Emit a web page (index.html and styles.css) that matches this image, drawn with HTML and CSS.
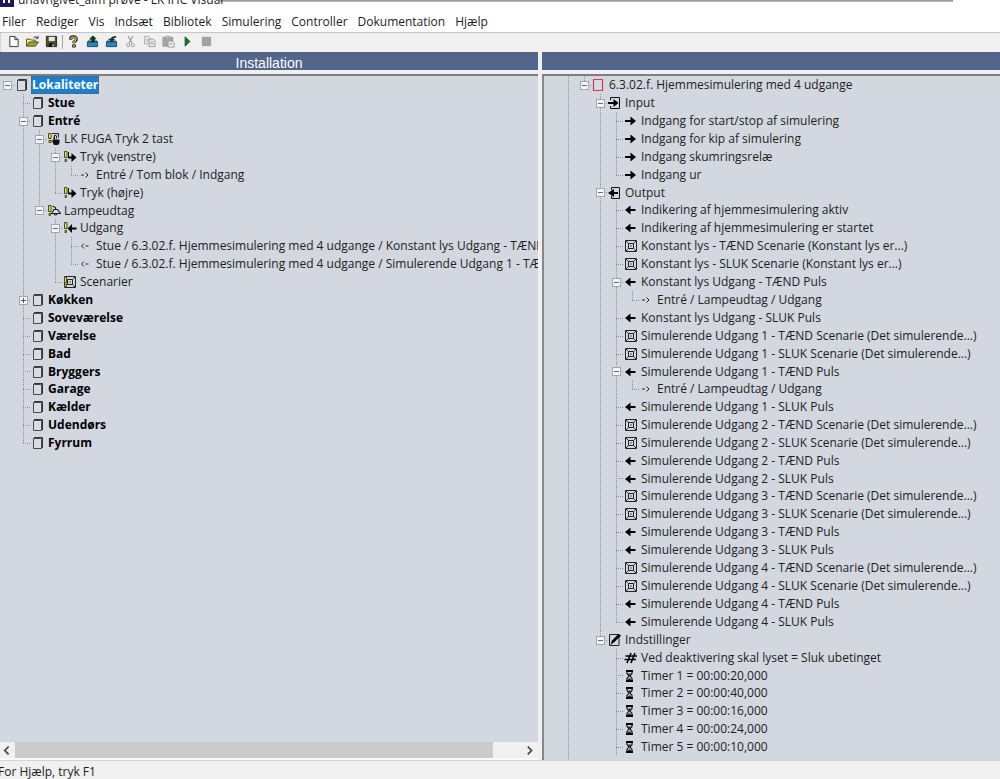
FILE: index.html
```
<!DOCTYPE html>
<html lang="da">
<head>
<meta charset="utf-8">
<meta name="viewport" content="width=device-width, initial-scale=1">
<title>unavngivet_alm prøve - LK IHC Visual</title>
<link rel="stylesheet" href="styles.css">
</head>
<body>
<svg class="sprite" aria-hidden="true">
  <symbol id="room" viewBox="0 0 14 14"><path d="M2.500 2.500h8v10h-8z" fill="#d9dce3" stroke="#4a4a4a"/><path d="M3 1.500h8.500V12" fill="none" stroke="#333"/></symbol>
  <symbol id="block" viewBox="0 0 14 14"><path d="M1.500 1.500h9v11h-9z" fill="#d8dae2" stroke="#d23a50" stroke-width="1.200"/></symbol>
  <symbol id="fuga" viewBox="0 0 14 14"><path d="M1.500 1.500h2.500v5H1.500zM2 8.500h2v2H2z" fill="#e4e66a" stroke="#4a4a10"/><path d="M5 1.500h6.500v4M7 3.500h2M7.500 3.500v3M9.500 3.500v3" fill="none" stroke="#222"/><path d="M4.500 8l2 .5V5H8v2.500h4.500V11l-1.500 2H7z" fill="#111"/></symbol>
  <symbol id="key-in" viewBox="0 0 14 14"><path d="M1.500 1.500H4v6H1.500zM2 9.500h1.500v2H2z" fill="#e4e66a" stroke="#4a4a10"/><path d="M5.500 2v5.500H9" fill="none" stroke="#111"/><path d="M5 6.500h3.500V3l5 4.500-5 4.500V8.500H5z" fill="#000"/></symbol>
  <symbol id="key-out" viewBox="0 0 14 14"><path d="M1.500 1.500H4v6H1.500zM2 9.500h1.500v2H2z" fill="#e4e66a" stroke="#4a4a10"/><path d="M4.500 7.500L9 3v3.500h4.500v2H9V12z" fill="#000"/></symbol>
  <symbol id="lamp" viewBox="0 0 14 14"><path d="M1.500 1.500H4v6H1.500zM2 9.500h1.500v2H2z" fill="#e4e66a" stroke="#4a4a10"/><path d="M4.500 9.500L7 5.500h3.500l3 4zM8.500 5.500V3.500L5.500 2M7 10q1.500 2 3 0" fill="none" stroke="#222" stroke-width="1.200"/></symbol>
  <symbol id="right" viewBox="0 0 14 14"><path d="M1 6h5.500V2.500l5.500 4.500-5.500 4.500V8H1z" fill="#000"/></symbol>
  <symbol id="left" viewBox="0 0 14 14"><path d="M11.500 6h-5V2.500L1 7l5.500 4.500V8h5z" fill="#000"/></symbol>
  <symbol id="link-right" viewBox="0 0 14 14"><path d="M2 7h3M6.500 4.500L9 7 6.500 9.500" fill="none" stroke="#222"/></symbol>
  <symbol id="link-left" viewBox="0 0 14 14"><path d="M6.500 7h3M5 4.500L2.500 7 5 9.500" fill="none" stroke="#222"/></symbol>
  <symbol id="scene" viewBox="0 0 14 14"><path d="M1.500 1.500h11v11h-11zM4.500 4.500h5v5h-5zM2 2l2.500 2.500M12 2L9.500 4.500M2 12l2.500-2.500M12 12L9.500 9.500" fill="none" stroke="#222"/><path d="M6 6h2v2H6z" fill="#999"/></symbol>
  <symbol id="key-scene" viewBox="0 0 14 14"><use href="#scene"/><path d="M1.500 2h2v6h-2zM1.500 9.500h2v2h-2z" fill="#e4e66a" stroke="#4a4a10"/></symbol>
  <symbol id="input" viewBox="0 0 14 14"><path d="M2.500 4V1.500h9v11h-9V10" fill="none" stroke="#111"/><path d="M0 6h5.500V3l5 4-5 4V8H0z" fill="#000"/></symbol>
  <symbol id="output" viewBox="0 0 14 14"><path d="M3.500 4V1.500h8v11h-8V10" fill="none" stroke="#111"/><path d="M10 6H6V3L0 7l6 4V8h4z" fill="#000"/></symbol>
  <symbol id="settings" viewBox="0 0 14 14"><path d="M1.500 1.500h9.500v11H1.500z" fill="none" stroke="#222"/><path d="M2.500 12L4 7.500 10.500 1 13 2.500 7 8.500z" fill="#000"/></symbol>
  <symbol id="hash" viewBox="0 0 14 14"><path d="M1.500 5h11.500M.5 8.500H12M7 2L3 12M11 2L7 12" fill="none" stroke="#000" stroke-width="1.600"/></symbol>
  <symbol id="timer" viewBox="0 0 14 14"><path d="M2 2h7M2 12h7" stroke="#000" stroke-width="2"/><path d="M3 2v2.500L5 7 3 9.500V12M8 2v2.500L6 7l2 2.500V12" fill="none" stroke="#111" stroke-width="1.200"/><path d="M4 4.500h3L5.500 7zM3.500 11l2-2 2 2z" fill="#222"/></symbol>
</svg>
<div class="app">
  <header class="titlebar"><span class="logo"></span><span class="title">unavngivet_alm prøve - LK IHC Visual</span></header>
  <nav class="menubar">
    <button>Filer</button><button>Rediger</button><button>Vis</button><button>Indsæt</button><button>Bibliotek</button><button>Simulering</button><button>Controller</button><button>Dokumentation</button><button>Hjælp</button>
  </nav>
  <div class="toolbar" role="toolbar" aria-label="Værktøjer">
    <button aria-label="Ny"><svg viewBox="0 0 14 14"><path d="M3 1.500h5.500L12 5v7.500H3zM8.500 1.500V5H12" fill="#fff" stroke="#333"/></svg></button>
    <button aria-label="Åbn"><svg viewBox="0 0 14 14"><path d="M.5 12V4.500H5l1 1h4V8" fill="#f1ee8a" stroke="#4b4b18"/><path d="M.5 12L3.500 7.500h10L10 12z" fill="#a5a23a" stroke="#4b4b18"/><path d="M8 3q2-2.500 4 0m1-2v2.500h-2.500" fill="none" stroke="#222"/></svg></button>
    <button aria-label="Gem"><svg viewBox="0 0 14 14"><path d="M1.500 1.500h11v11h-11z" fill="#50552c" stroke="#222"/><path d="M4 2h6.500v4.500H4z" fill="#e6e8ea"/><path d="M4 9h6v3.500H4z" fill="#111"/><path d="M8 10h1.500v2.500H8z" fill="#ddd"/></svg></button>
    <span class="separator"></span>
    <button aria-label="Hjælp"><svg viewBox="0 0 14 14"><path d="M4 5V3.500Q4.500 2 7 2t3 2-2.500 3.500V9" fill="none" stroke="#222" stroke-width="3.200"/><path d="M4 4.500Q4 2.200 7 2.200t2.800 2T7.400 7.500V9" fill="none" stroke="#dfe04c" stroke-width="1.200"/><path d="M6 10.500h3V13H6z" fill="#dfe04c" stroke="#222"/></svg></button>
    <button aria-label="Send til controller"><svg viewBox="0 0 14 14"><path d="M1.500 7.500h11v5h-11z" fill="#2689c4" stroke="#174a6c"/><path d="M2 7l2-2h6l2 2z" fill="#c8d2d8" stroke="#345"/><path d="M5.500 8V4H3.500L7.500 .5 11.500 4h-2v4z" fill="#123c22"/></svg></button>
    <button aria-label="Hent fra controller"><svg viewBox="0 0 14 14"><path d="M1.500 7.500h11v5h-11z" fill="#2689c4" stroke="#174a6c"/><path d="M2 7l2-2h6l2 2z" fill="#c8d2d8" stroke="#345"/><path d="M7 7.500L3.500 4H6q1-3 6-3v2q-3 0-3 1.500h2z" fill="#123c22"/></svg></button>
    <button aria-label="Klip" disabled><svg viewBox="0 0 14 14"><path d="M4.500 1l4 8M9.500 1l-4 8" fill="none" stroke="#999" stroke-width="1.200"/><circle cx="4.500" cy="11" r="1.700" fill="none" stroke="#999"/><circle cx="9.500" cy="11" r="1.700" fill="none" stroke="#999"/></svg></button>
    <button aria-label="Kopier" disabled><svg viewBox="0 0 14 14"><path d="M1.500 1.500H6l2 2v6H1.500zM3 4.500h3M3 6.500h3" fill="#eee" stroke="#aaa"/><path d="M6.500 4.500H11l2 2v6H6.500zM8 7.500h3M8 9.500h3.500" fill="#eee" stroke="#999"/></svg></button>
    <button aria-label="Sæt ind" disabled><svg viewBox="0 0 14 14"><path d="M1 2.500h10.500v9.500H1z" fill="#a6a6a6" stroke="#999"/><path d="M4 1.500h4.500v2H4z" fill="#ddd" stroke="#999"/><path d="M6.500 6.500H11l2 2v4.500H6.500zM8 9.500h3" fill="#eee" stroke="#999"/></svg></button>
    <button aria-label="Start simulering"><svg viewBox="0 0 14 14"><path d="M4.500 2l5 5-5 5z" fill="#0d7a1f" stroke="#0a4d18"/></svg></button>
    <button aria-label="Stop simulering" disabled><svg viewBox="0 0 14 14"><path d="M2 2h10v10H2z" fill="#a3a3a3"/></svg></button>
  </div>
  <main class="panes">
    <section class="column">
      <h1 class="heading">Installation</h1>
      <div class="pane">
        <ul class="tree">
          <li class="root"><div class="row"><span class="stub"><button class="toggle" aria-label="Fold sammen" aria-expanded="true"></button></span><svg><use href="#room"/></svg><b class="label selected">Lokaliteter</b></div>
            <ul>
              <li><div class="row"><span class="stub"></span><svg><use href="#room"/></svg><b class="label">Stue</b></div></li>
              <li><div class="row"><span class="stub"><button class="toggle" aria-label="Fold sammen" aria-expanded="true"></button></span><svg><use href="#room"/></svg><b class="label">Entré</b></div>
                <ul>
                  <li><div class="row"><span class="stub"><button class="toggle" aria-label="Fold sammen" aria-expanded="true"></button></span><svg><use href="#fuga"/></svg><span class="label">LK FUGA Tryk 2 tast</span></div>
                    <ul>
                      <li><div class="row"><span class="stub"><button class="toggle" aria-label="Fold sammen" aria-expanded="true"></button></span><svg><use href="#key-in"/></svg><span class="label">Tryk (venstre)</span></div>
                        <ul>
                          <li><div class="row"><span class="stub"></span><svg><use href="#link-right"/></svg><span class="label">Entré / Tom blok / Indgang</span></div></li>
                        </ul>
                      </li>
                      <li><div class="row"><span class="stub"></span><svg><use href="#key-in"/></svg><span class="label">Tryk (højre)</span></div></li>
                    </ul>
                  </li>
                  <li><div class="row tight"><span class="stub"><button class="toggle" aria-label="Fold sammen" aria-expanded="true"></button></span><svg><use href="#lamp"/></svg><span class="label">Lampeudtag</span></div>
                    <ul>
                      <li><div class="row"><span class="stub"><button class="toggle" aria-label="Fold sammen" aria-expanded="true"></button></span><svg><use href="#key-out"/></svg><span class="label">Udgang</span></div>
                        <ul>
                          <li><div class="row"><span class="stub"></span><svg><use href="#link-left"/></svg><span class="label">Stue / 6.3.02.f. Hjemmesimulering med 4 udgange / Konstant lys Udgang - TÆND Puls</span></div></li>
                          <li><div class="row"><span class="stub"></span><svg><use href="#link-left"/></svg><span class="label">Stue / 6.3.02.f. Hjemmesimulering med 4 udgange / Simulerende Udgang 1 - TÆND Puls</span></div></li>
                        </ul>
                      </li>
                      <li><div class="row"><span class="stub"></span><svg><use href="#key-scene"/></svg><span class="label">Scenarier</span></div></li>
                    </ul>
                  </li>
                </ul>
              </li>
              <li><div class="row"><span class="stub"><button class="toggle" aria-label="Fold ud" aria-expanded="false"></button></span><svg><use href="#room"/></svg><b class="label">Køkken</b></div></li>
              <li><div class="row"><span class="stub"></span><svg><use href="#room"/></svg><b class="label">Soveværelse</b></div></li>
              <li><div class="row"><span class="stub"></span><svg><use href="#room"/></svg><b class="label">Værelse</b></div></li>
              <li><div class="row"><span class="stub"></span><svg><use href="#room"/></svg><b class="label">Bad</b></div></li>
              <li><div class="row tight"><span class="stub"></span><svg><use href="#room"/></svg><b class="label">Bryggers</b></div></li>
              <li><div class="row"><span class="stub"></span><svg><use href="#room"/></svg><b class="label">Garage</b></div></li>
              <li><div class="row"><span class="stub"></span><svg><use href="#room"/></svg><b class="label">Kælder</b></div></li>
              <li><div class="row"><span class="stub"></span><svg><use href="#room"/></svg><b class="label">Udendørs</b></div></li>
              <li><div class="row"><span class="stub"></span><svg><use href="#room"/></svg><b class="label">Fyrrum</b></div></li>
            </ul>
          </li>
        </ul>
      </div>
      <div class="scrollbar">
        <button aria-label="Rul til venstre"><svg viewBox="0 0 10 10"><path d="M6 1.500L2.500 5 6 8.500" fill="none" stroke="#444" stroke-width="1.500"/></svg></button>
        <div class="track"><div class="thumb"></div></div>
        <button aria-label="Rul til højre"><svg viewBox="0 0 10 10"><path d="M2.500 1.500L6 5 2.500 8.500" fill="none" stroke="#444" stroke-width="1.500"/></svg></button>
      </div>
    </section>
    <section class="column">
      <div class="heading"></div>
      <div class="pane functions">
        <ul class="tree">
          <li class="continues">
            <ul>
              <li><div class="row"><span class="stub"><button class="toggle" aria-label="Fold sammen" aria-expanded="true"></button></span><svg><use href="#block"/></svg><span class="label">6.3.02.f. Hjemmesimulering med 4 udgange</span></div>
                <ul>
                  <li><div class="row"><span class="stub"><button class="toggle" aria-label="Fold sammen" aria-expanded="true"></button></span><svg><use href="#input"/></svg><span class="label">Input</span></div>
                    <ul>
                      <li><div class="row"><span class="stub"></span><svg><use href="#right"/></svg><span class="label">Indgang for start/stop af simulering</span></div></li>
                      <li><div class="row"><span class="stub"></span><svg><use href="#right"/></svg><span class="label">Indgang for kip af simulering</span></div></li>
                      <li><div class="row"><span class="stub"></span><svg><use href="#right"/></svg><span class="label">Indgang skumringsrelæ</span></div></li>
                      <li><div class="row"><span class="stub"></span><svg><use href="#right"/></svg><span class="label">Indgang ur</span></div></li>
                    </ul>
                  </li>
                  <li><div class="row tight"><span class="stub"><button class="toggle" aria-label="Fold sammen" aria-expanded="true"></button></span><svg><use href="#output"/></svg><span class="label">Output</span></div>
                    <ul>
                      <li><div class="row"><span class="stub"></span><svg><use href="#left"/></svg><span class="label">Indikering af hjemmesimulering aktiv</span></div></li>
                      <li><div class="row"><span class="stub"></span><svg><use href="#left"/></svg><span class="label">Indikering af hjemmesimulering er startet</span></div></li>
                      <li><div class="row"><span class="stub"></span><svg><use href="#scene"/></svg><span class="label">Konstant lys - TÆND Scenarie (Konstant lys er...)</span></div></li>
                      <li><div class="row"><span class="stub"></span><svg><use href="#scene"/></svg><span class="label">Konstant lys - SLUK Scenarie (Konstant lys er...)</span></div></li>
                      <li><div class="row"><span class="stub"><button class="toggle" aria-label="Fold sammen" aria-expanded="true"></button></span><svg><use href="#left"/></svg><span class="label">Konstant lys Udgang - TÆND Puls</span></div>
                        <ul>
                          <li><div class="row"><span class="stub"></span><svg><use href="#link-right"/></svg><span class="label">Entré / Lampeudtag / Udgang</span></div></li>
                        </ul>
                      </li>
                      <li><div class="row"><span class="stub"></span><svg><use href="#left"/></svg><span class="label">Konstant lys Udgang - SLUK Puls</span></div></li>
                      <li><div class="row"><span class="stub"></span><svg><use href="#scene"/></svg><span class="label">Simulerende Udgang 1 - TÆND Scenarie (Det simulerende...)</span></div></li>
                      <li><div class="row"><span class="stub"></span><svg><use href="#scene"/></svg><span class="label">Simulerende Udgang 1 - SLUK Scenarie (Det simulerende...)</span></div></li>
                      <li><div class="row tight"><span class="stub"><button class="toggle" aria-label="Fold sammen" aria-expanded="true"></button></span><svg><use href="#left"/></svg><span class="label">Simulerende Udgang 1 - TÆND Puls</span></div>
                        <ul>
                          <li><div class="row"><span class="stub"></span><svg><use href="#link-right"/></svg><span class="label">Entré / Lampeudtag / Udgang</span></div></li>
                        </ul>
                      </li>
                      <li><div class="row"><span class="stub"></span><svg><use href="#left"/></svg><span class="label">Simulerende Udgang 1 - SLUK Puls</span></div></li>
                      <li><div class="row"><span class="stub"></span><svg><use href="#scene"/></svg><span class="label">Simulerende Udgang 2 - TÆND Scenarie (Det simulerende...)</span></div></li>
                      <li><div class="row"><span class="stub"></span><svg><use href="#scene"/></svg><span class="label">Simulerende Udgang 2 - SLUK Scenarie (Det simulerende...)</span></div></li>
                      <li><div class="row"><span class="stub"></span><svg><use href="#left"/></svg><span class="label">Simulerende Udgang 2 - TÆND Puls</span></div></li>
                      <li><div class="row tight"><span class="stub"></span><svg><use href="#left"/></svg><span class="label">Simulerende Udgang 2 - SLUK Puls</span></div></li>
                      <li><div class="row"><span class="stub"></span><svg><use href="#scene"/></svg><span class="label">Simulerende Udgang 3 - TÆND Scenarie (Det simulerende...)</span></div></li>
                      <li><div class="row"><span class="stub"></span><svg><use href="#scene"/></svg><span class="label">Simulerende Udgang 3 - SLUK Scenarie (Det simulerende...)</span></div></li>
                      <li><div class="row"><span class="stub"></span><svg><use href="#left"/></svg><span class="label">Simulerende Udgang 3 - TÆND Puls</span></div></li>
                      <li><div class="row"><span class="stub"></span><svg><use href="#left"/></svg><span class="label">Simulerende Udgang 3 - SLUK Puls</span></div></li>
                      <li><div class="row"><span class="stub"></span><svg><use href="#scene"/></svg><span class="label">Simulerende Udgang 4 - TÆND Scenarie (Det simulerende...)</span></div></li>
                      <li><div class="row"><span class="stub"></span><svg><use href="#scene"/></svg><span class="label">Simulerende Udgang 4 - SLUK Scenarie (Det simulerende...)</span></div></li>
                      <li><div class="row"><span class="stub"></span><svg><use href="#left"/></svg><span class="label">Simulerende Udgang 4 - TÆND Puls</span></div></li>
                      <li><div class="row"><span class="stub"></span><svg><use href="#left"/></svg><span class="label">Simulerende Udgang 4 - SLUK Puls</span></div></li>
                    </ul>
                  </li>
                  <li><div class="row"><span class="stub"><button class="toggle" aria-label="Fold sammen" aria-expanded="true"></button></span><svg><use href="#settings"/></svg><span class="label">Indstillinger</span></div>
                    <ul>
                      <li><div class="row"><span class="stub"></span><svg><use href="#hash"/></svg><span class="label">Ved deaktivering skal lyset = Sluk ubetinget</span></div></li>
                      <li><div class="row tight"><span class="stub"></span><svg><use href="#timer"/></svg><span class="label">Timer 1 = 00:00:20,000</span></div></li>
                      <li><div class="row"><span class="stub"></span><svg><use href="#timer"/></svg><span class="label">Timer 2 = 00:00:40,000</span></div></li>
                      <li><div class="row"><span class="stub"></span><svg><use href="#timer"/></svg><span class="label">Timer 3 = 00:00:16,000</span></div></li>
                      <li><div class="row"><span class="stub"></span><svg><use href="#timer"/></svg><span class="label">Timer 4 = 00:00:24,000</span></div></li>
                      <li class="continues"><div class="row"><span class="stub"></span><svg><use href="#timer"/></svg><span class="label">Timer 5 = 00:00:10,000</span></div></li>
                    </ul>
                  </li>
                </ul>
              </li>
            </ul>
          </li>
        </ul>
      </div>
    </section>
  </main>
  <footer class="status">For Hjælp, tryk F1</footer>
</div>
</body>
</html>
```

FILE: styles.css
```
* { box-sizing: border-box; }

body {
  margin: 0;
  background: #f0f0f0;
  color: #1c1e22;
  font: 12px/18px "Open Sans", "Noto Sans", sans-serif;
}

button {
  padding: 0;
  border: 0;
  background: none;
  color: inherit;
  font: inherit;
}

ul { margin: 0; padding: 0; list-style: none; }
svg { flex: none; width: 14px; height: 14px; }
.sprite { display: none; }

.app {
  display: flex;
  flex-direction: column;
  height: 100vh;
  overflow: hidden;
}

/* Window frame */
.titlebar {
  display: flex;
  flex: none;
  align-items: flex-end;
  gap: 4px;
  height: 9px;
  overflow: hidden;
  background: linear-gradient(#8c8c8c, #c4c4c4) 220px 0 / calc(100% - 267px) 2px no-repeat #fff;
}
.logo {
  width: 14px;
  height: 7px;
  margin-bottom: 2px;
  background: linear-gradient(#fff, #fff) 3px 0 / 2px 3px no-repeat, linear-gradient(#fff, #fff) 8px 0 / 2px 3px no-repeat, #1d1b5e;
}
.title { white-space: nowrap; }

.menubar {
  display: flex;
  flex: none;
  gap: 10px;
  height: 24px;
  padding: 2px 2px 0;
  border-bottom: 1px solid #c6c6c6;
  background: #fff;
}

.toolbar {
  display: flex;
  flex: none;
  align-items: center;
  height: 19px;
  padding: 0 0 2px 3px;
  border-left: 1px dotted #b8b8b8;
}
.toolbar button { display: flex; justify-content: center; width: 19px; }
.toolbar svg { width: 13px; height: 13px; }
.separator { width: 1px; height: 14px; margin: 0 1px; background: #a5a5a5; }

/* Panes */
.panes {
  display: grid;
  flex: 1;
  grid-template-columns: 538fr 458fr;
  gap: 4px;
  min-height: 0;
}
.column { display: flex; flex-direction: column; min-width: 0; min-height: 0; }
.heading {
  flex: none;
  height: 18px;
  margin: 0 0 4px;
  border-top: 1px solid #5b6478;
  background: #52658d;
  color: #fff;
  font: 14px/20px "Liberation Sans", Arial, sans-serif;
  text-align: center;
}
.pane {
  flex: 1;
  min-height: 0;
  overflow: hidden;
  border-top: 2px solid #7c7e82;
  background: #d3d7e0;
}
.functions {
  padding-left: 17px;
  border-left: 2px solid #85878b;
}
.functions > .tree, .functions > .tree > li { height: 100%; }

/* Tree */
.tree ul { padding-left: 16px; }
.tree li {
  background: repeating-linear-gradient(#8d929c 0 1px, transparent 1px 2px) 7px 0 / 1px 100% no-repeat;
}
.tree li:last-child { background-size: 1px 9px; }
.tree li.continues { background-size: 1px 100%; }
.tree li.root { background: none; }
.row { display: flex; align-items: center; height: 18px; white-space: nowrap; }
.row.tight { height: 17px; }
.stub {
  display: flex;
  flex: none;
  align-items: center;
  width: 15px;
  height: 9px;
  padding-left: 3px;
  background: repeating-linear-gradient(90deg, #8d929c 0 1px, transparent 1px 2px) 7px 4px / 8px 1px no-repeat;
}
.toggle {
  width: 9px;
  height: 9px;
  border: 1px solid #a2a6ae;
  background: linear-gradient(#666b75, #666b75) center / 5px 1px no-repeat, #f3f4f6;
}
.toggle[aria-expanded="false"] {
  background: linear-gradient(#555a64, #555a64) center / 5px 1px no-repeat, linear-gradient(#555a64, #555a64) center / 1px 5px no-repeat, #f3f4f6;
}
.label { margin-left: 2px; padding: 0 1px; }
b.label { color: #000; }
b.selected {
  outline: 1px dotted #6b5a4a;
  outline-offset: -1px;
  background: #1a7fd0;
  color: #fff;
}

/* Scrollbar */
.scrollbar {
  display: flex;
  flex: none;
  height: 18px;
  border-bottom: 2px solid #fafafa;
}
.scrollbar button { display: flex; flex: none; align-items: center; justify-content: center; width: 15px; }
.scrollbar button svg { width: 11px; height: 11px; }
.track { flex: 1; }
.thumb { width: 94%; height: 100%; background: #cbcbcb; }

.status {
  flex: none;
  height: 19px;
  border-top: 1px solid #d4d4d4;
  line-height: 22px;
  text-indent: -2px;
}
```
